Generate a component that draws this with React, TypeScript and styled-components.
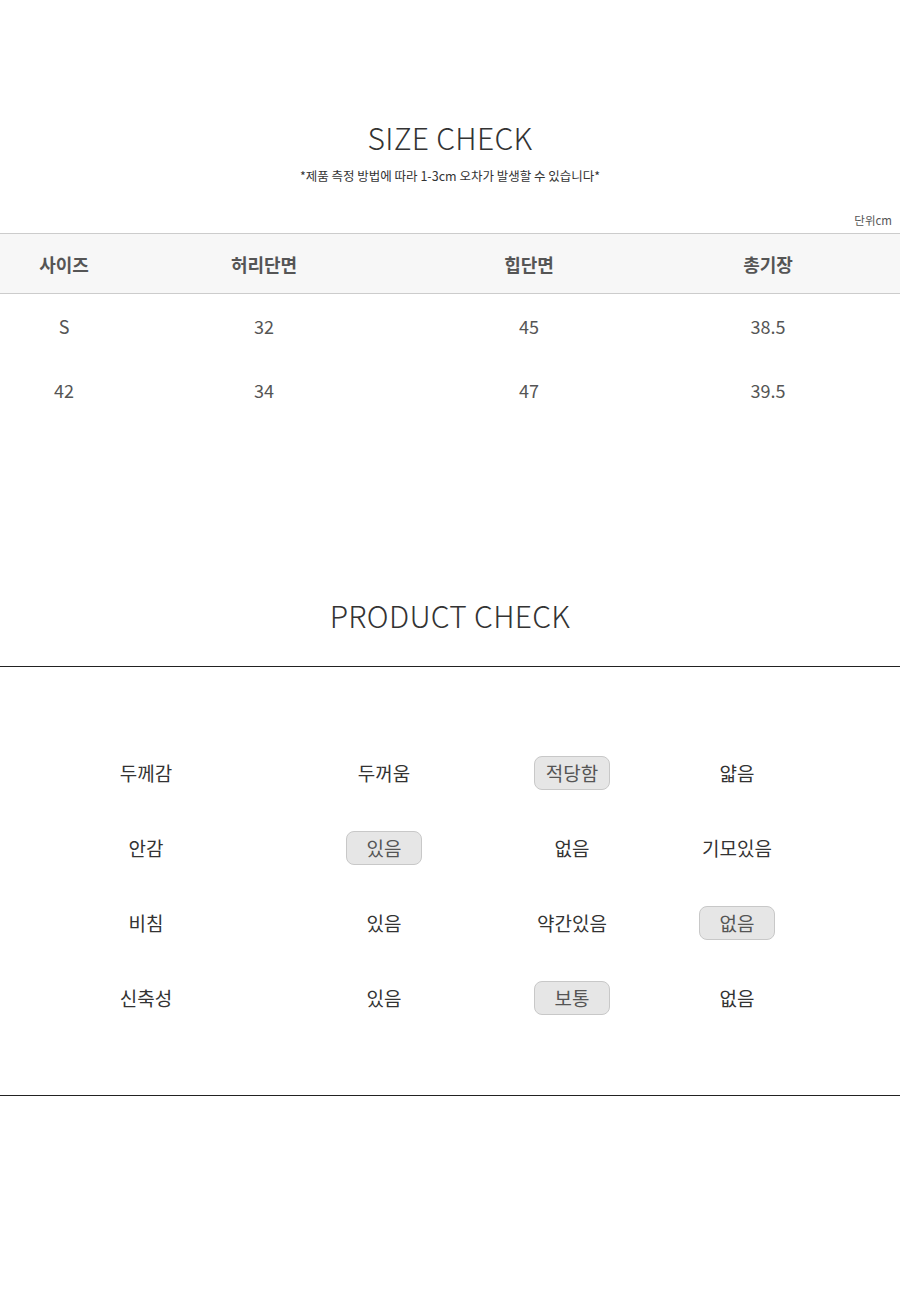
import React from 'react'
import styled, { createGlobalStyle } from 'styled-components'

const GlobalStyle = createGlobalStyle`
  html, body {
    margin: 0;
    padding: 0;
    background: #fff;
  }
  body {
    font-family: "Noto Sans CJK KR", "Noto Sans", sans-serif;
    color: #333;
  }
`

const sizeRows = [
  ['S', '32', '45', '38.5'],
  ['42', '34', '47', '39.5'],
]

const productRows: { label: string; options: string[]; selected: number }[] = [
  { label: '두께감', options: ['두꺼움', '적당함', '얇음'], selected: 1 },
  { label: '안감', options: ['있음', '없음', '기모있음'], selected: 0 },
  { label: '비침', options: ['있음', '약간있음', '없음'], selected: 2 },
  { label: '신축성', options: ['있음', '보통', '없음'], selected: 1 },
]

const App: React.FC = () => {
  return (
    <Page>
      <GlobalStyle />
      <SizeSection>
        <Title>SIZE CHECK</Title>
        <Notice>*제품 측정 방법에 따라 1-3cm 오차가 발생할 수 있습니다*</Notice>
        <Unit>단위cm</Unit>
        <SizeTable>
          <HeadRow>
            <HeadCell>사이즈</HeadCell>
            <HeadCell>허리단면</HeadCell>
            <HeadCell>힙단면</HeadCell>
            <HeadCell>총기장</HeadCell>
          </HeadRow>
          {sizeRows.map((row) => (
            <BodyRow key={row[0]}>
              {row.map((v, i) => (
                <BodyCell key={i}>{v}</BodyCell>
              ))}
            </BodyRow>
          ))}
        </SizeTable>
      </SizeSection>

      <ProductSection>
        <Title>PRODUCT CHECK</Title>
        <CheckBox>
          {productRows.map((row) => (
            <CheckRow key={row.label}>
              <CheckLabel>{row.label}</CheckLabel>
              {row.options.map((opt, i) => (
                <OptionCell key={opt + i}>
                  <Option $active={i === row.selected}>{opt}</Option>
                </OptionCell>
              ))}
            </CheckRow>
          ))}
        </CheckBox>
      </ProductSection>
    </Page>
  )
}

export default App

const Page = styled.div`
  width: 900px;
  min-height: 1300px;
  padding-top: 119px;
  box-sizing: border-box;
`

const SizeSection = styled.section`
  display: flex;
  flex-direction: column;
`

const Title = styled.h2`
  margin: 0;
  text-align: center;
  font-size: 30px;
  line-height: 36px;
  font-weight: 300;
  color: #333;
  letter-spacing: 0.3px;
`

const Notice = styled.p`
  margin: 12px 0 0;
  text-align: center;
  font-size: 12.5px;
  line-height: 18px;
  color: #333;
`

const Unit = styled.div`
  margin-top: 27px;
  padding-right: 8px;
  text-align: right;
  font-size: 11.5px;
  line-height: 16px;
  color: #555;
`

const SizeTable = styled.div`
  margin-top: 5px;
`

const cols = `128px 272px 258px 220px 1fr`

const HeadRow = styled.div`
  display: grid;
  grid-template-columns: ${cols};
  height: 59px;
  align-items: center;
  background: #f7f7f7;
  border-top: 1px solid #ccc;
  border-bottom: 1px solid #ccc;
`

const HeadCell = styled.div`
  text-align: center;
  font-size: 18px;
  font-weight: 700;
  color: #555;
`

const BodyRow = styled.div`
  display: grid;
  grid-template-columns: ${cols};
  height: 64px;
  align-items: center;
`

const BodyCell = styled.div`
  text-align: center;
  font-size: 18px;
  font-weight: 400;
  color: #555;
`

const ProductSection = styled.section`
  margin-top: 175px;
  display: flex;
  flex-direction: column;
`

const CheckBox = styled.div`
  margin-top: 33px;
  border-top: 1px solid #222;
  border-bottom: 1px solid #222;
  padding: 68px 0 60px;
`

const CheckRow = styled.div`
  display: grid;
  grid-template-columns: 292px 184px 192px 138px 1fr;
  height: 75px;
  align-items: center;
`

const CheckLabel = styled.div`
  text-align: center;
  font-size: 19px;
  color: #333;
`

const OptionCell = styled.div`
  display: flex;
  justify-content: center;
`

const Option = styled.span<{ $active: boolean }>`
  display: inline-flex;
  align-items: center;
  justify-content: center;
  box-sizing: border-box;
  min-width: ${(p) => (p.$active ? '76px' : '0')};
  height: 34px;
  padding: 0 10px;
  font-size: 19px;
  color: ${(p) => (p.$active ? '#555' : '#333')};
  background: ${(p) => (p.$active ? '#e6e6e6' : 'transparent')};
  border: 1px solid ${(p) => (p.$active ? '#c8c8c8' : 'transparent')};
  border-radius: 8px;
`
